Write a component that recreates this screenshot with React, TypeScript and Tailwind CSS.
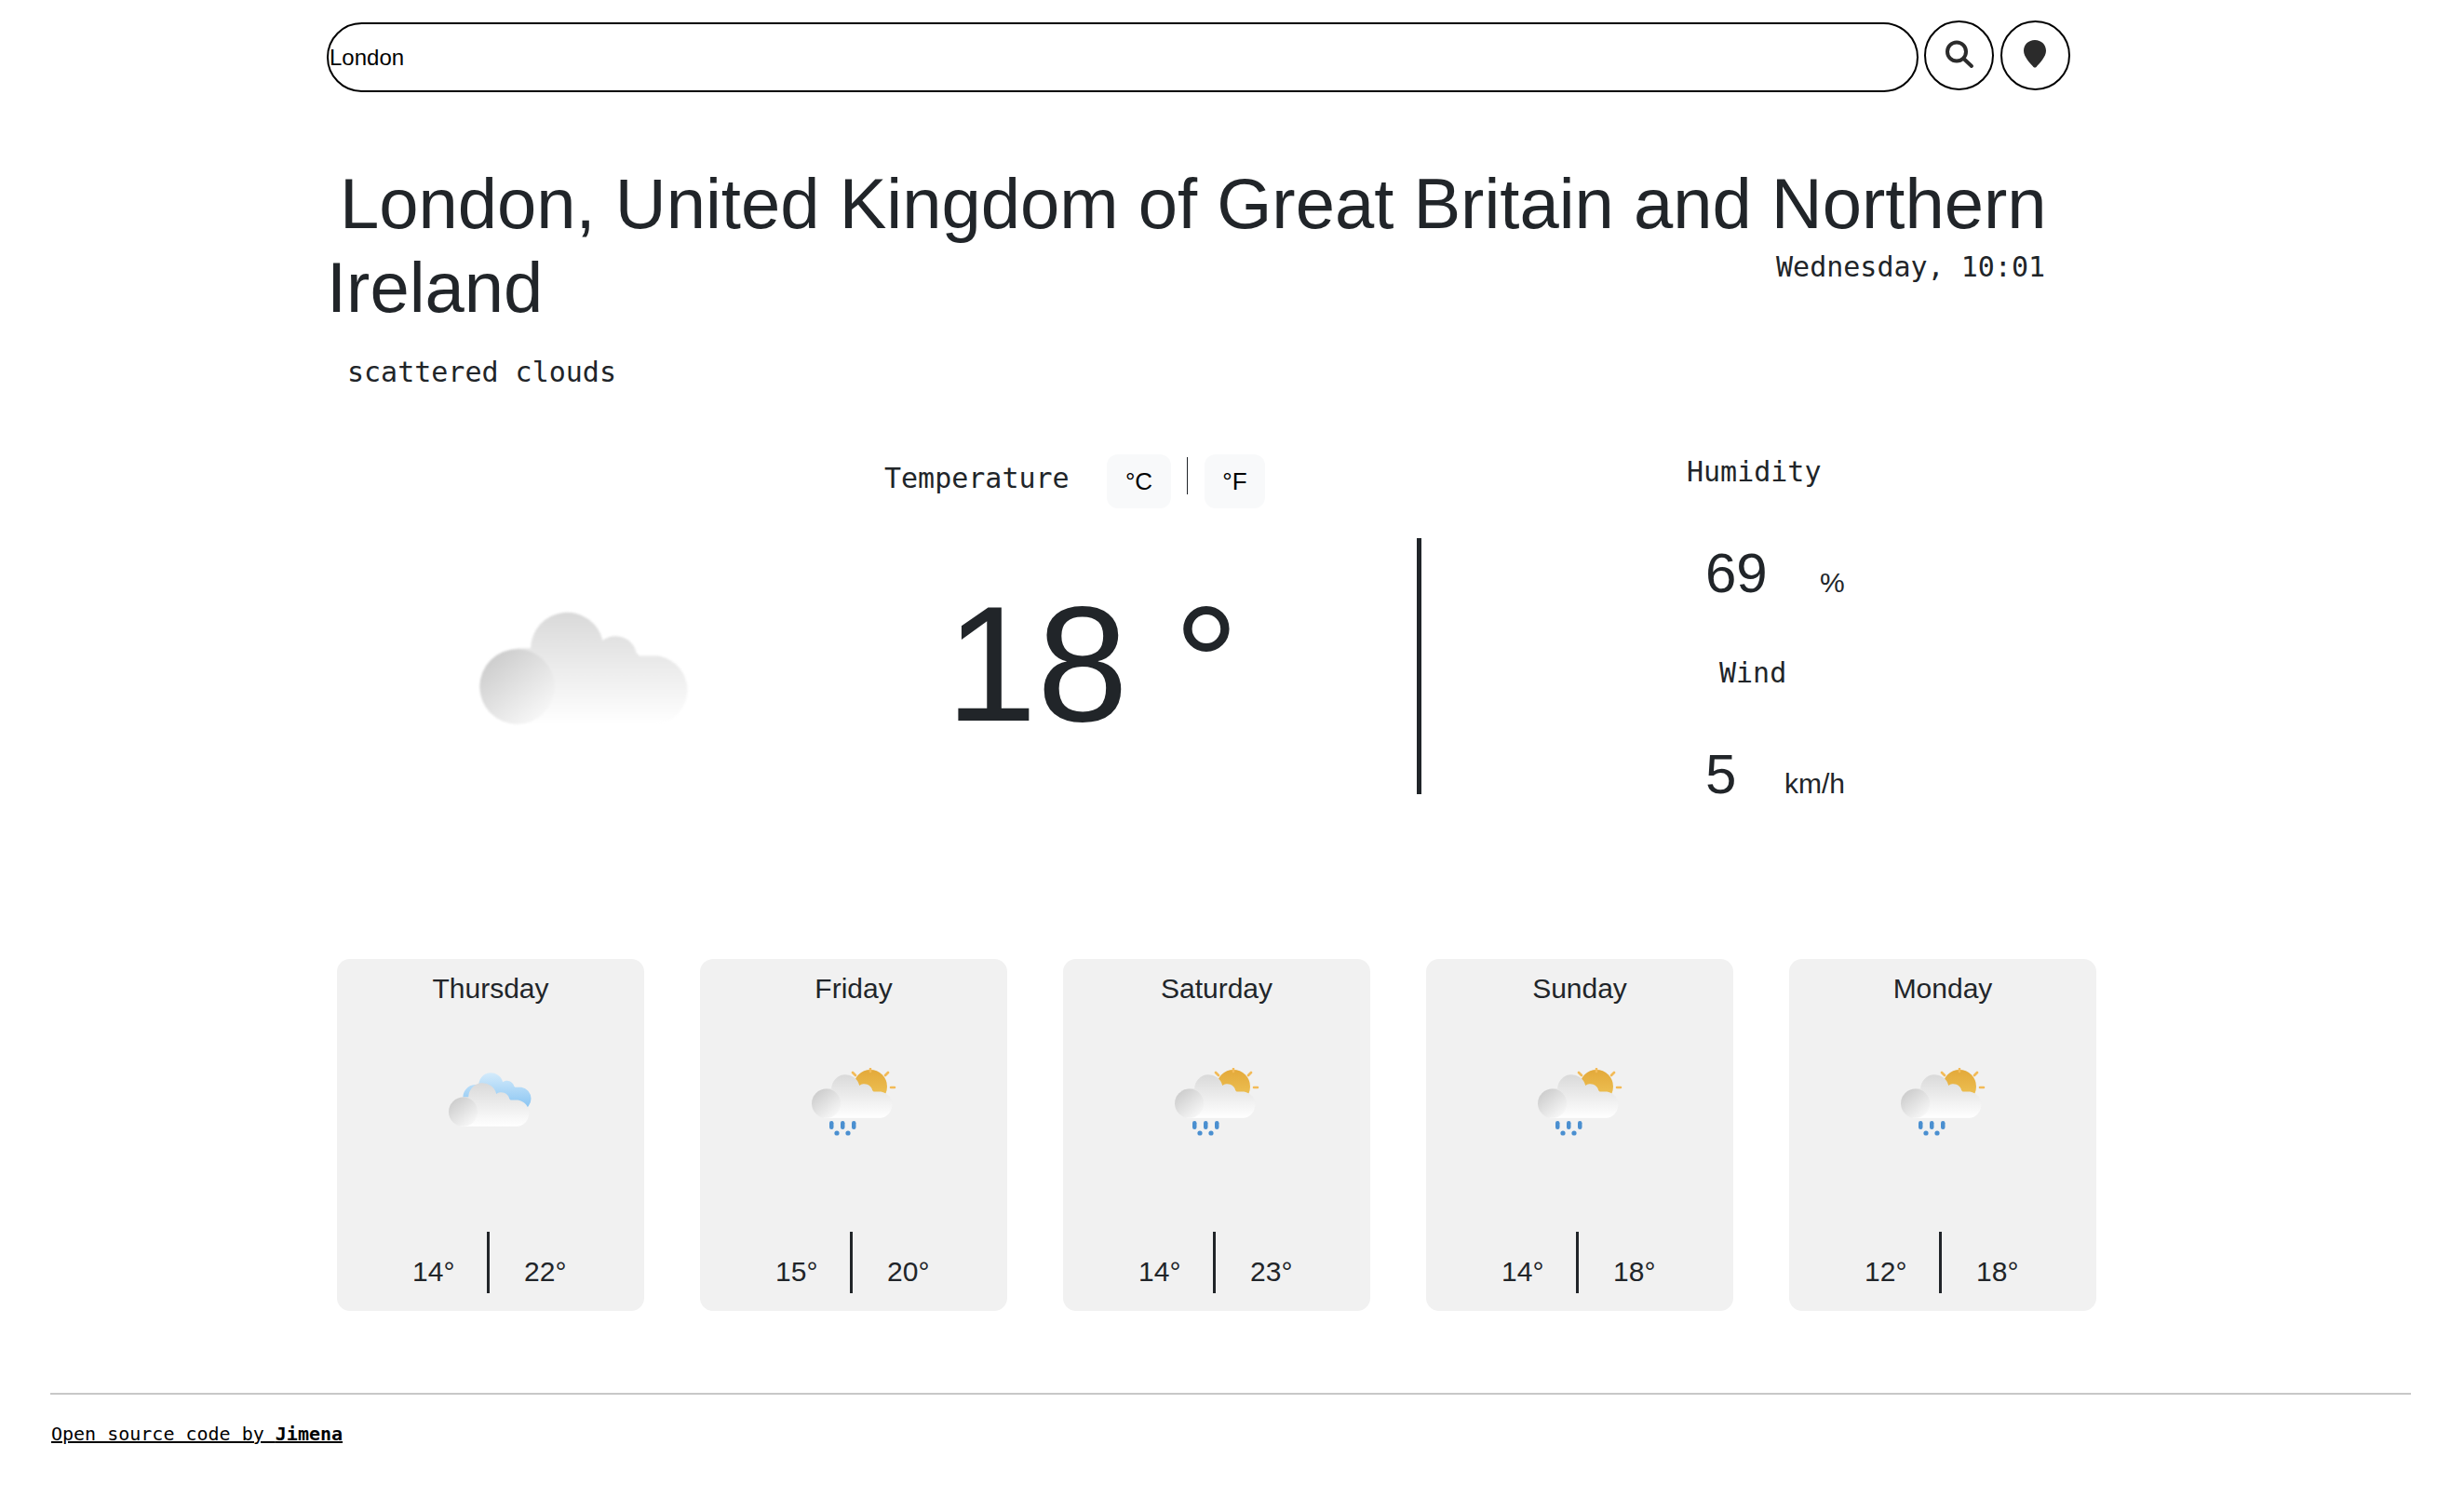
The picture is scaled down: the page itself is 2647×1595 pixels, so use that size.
const forecast = [
  { day: "Thursday", low: 14, high: 22, kind: "cloudy" },
  { day: "Friday", low: 15, high: 20, kind: "rain" },
  { day: "Saturday", low: 14, high: 23, kind: "rain" },
  { day: "Sunday", low: 14, high: 18, kind: "rain" },
  { day: "Monday", low: 12, high: 18, kind: "rain" },
];

const sans = "font-['Liberation_Sans',Arial,sans-serif]";
const mono = "font-['DejaVu_Sans_Mono',monospace]";

const CLOUD_PATH =
  "M53 38a38 38 0 0 1 75 -8a22 22 0 0 1 35 13q3 2 3 3h20a36 36 0 0 1 0 71h-140a30 30 0 0 1 -5 -79z";

// cloud shape is drawn at 222x117, callers scale it
function CloudShape({ id }: { id: string }) {
  return (
    <g>
      <defs>
        <linearGradient id={`${id}-body`} gradientUnits="userSpaceOnUse" x1="0" y1="0" x2="0" y2="117">
          <stop offset="0" stopColor="#d9d9d9" />
          <stop offset="1" stopColor="#ffffff" />
        </linearGradient>
        <linearGradient id={`${id}-ball`} x1="0.1" y1="0.1" x2="0.8" y2="0.95">
          <stop offset="0" stopColor="#cbcbcb" />
          <stop offset="1" stopColor="#f8f8f8" />
        </linearGradient>
      </defs>
      <path d={CLOUD_PATH} fill={`url(#${id}-body)`} />
      <circle cx="39" cy="78" r="39" fill={`url(#${id}-ball)`} />
    </g>
  );
}

function RainIcon({ id }: { id: string }) {
  return (
    <svg width="100" height="80" viewBox="0 0 100 80" className="block blur-[0.5px]">
      <defs>
        <linearGradient id={`${id}-sun`} x1="0" y1="0" x2="0" y2="1">
          <stop offset="0" stopColor="#e3a93a" />
          <stop offset="1" stopColor="#f0c75a" />
        </linearGradient>
      </defs>
      <circle cx="68" cy="20" r="18" fill={`url(#${id}-sun)`} />
      <g stroke="#f3bb58" strokeWidth="2.6" strokeLinecap="round">
        <path d="M68 2V-1M52 6L49 3M84 6L87 3M90 19h4" transform="translate(0 2)" />
      </g>
      <g transform="translate(5 7) scale(0.4)">
        <CloudShape id={id} />
      </g>
      <g fill="#4a8fd0">
        <rect x="24" y="57" width="4.500" height="9" rx="2.200" />
        <rect x="36" y="57" width="4.500" height="9" rx="2.200" />
        <rect x="48" y="57" width="4.500" height="9" rx="2.200" />
        <circle cx="32" cy="70" r="2.600" />
        <circle cx="44" cy="70" r="2.600" />
      </g>
    </svg>
  );
}

function CloudyIcon({ id }: { id: string }) {
  return (
    <svg width="100" height="80" viewBox="0 0 100 80" className="block blur-[0.5px]">
      <defs>
        <linearGradient id={`${id}-sky`} x1="0" y1="0" x2="0" y2="1">
          <stop offset="0" stopColor="#d4ebfb" />
          <stop offset="1" stopColor="#84c2f2" />
        </linearGradient>
      </defs>
      <g transform="translate(19 5) scale(0.345)" fill={`url(#${id}-sky)`}>
        <path d={CLOUD_PATH} />
      </g>
      <g transform="translate(5 16) scale(0.4)">
        <CloudShape id={id} />
      </g>
    </svg>
  );
}

export default function App() {
  return (
    <div className={`w-[2647px] h-[1595px] bg-white text-[#212529] overflow-hidden ${sans}`}>
      <div className="pl-[351px] pt-[22px] flex gap-[6px] items-start">
        <input
          defaultValue="London"
          className="w-[1710px] h-[75px] mt-[2px] border-2 border-black rounded-full px-[1px] text-[24px] text-black outline-none"
        />
        <button className="w-[75px] h-[75px] rounded-full border-2 border-black flex items-center justify-center">
          <svg width="34" height="34" viewBox="0 0 34 34" className="mr-[-1px]" fill="none" stroke="#2b2b2b" strokeWidth="4" strokeLinecap="round">
            <circle cx="14" cy="12.500" r="10" />
            <path d="M21.500 20L30 28" />
          </svg>
        </button>
        <button className="w-[75px] h-[75px] ml-[1px] rounded-full border-2 border-black flex items-center justify-center">
          <svg width="24" height="30" viewBox="0 0 24 30" className="mb-[3px] mr-[1px]">
            <path d="M12 0C5 0 0 5 0 11.500C0 18 7 25 10.500 29q1.500 1 3 0C17 25 24 18 24 11.500C24 5 19 0 12 0z" fill="#2b2b2b" />
          </svg>
        </button>
      </div>

      <div className="pl-[351px] pt-[75px] w-[2197px]">
        <h1 className="text-[76px] leading-[90px] whitespace-nowrap pl-[14px]">
          London, United Kingdom of Great Britain and Northern
        </h1>
        <div className="flex justify-between items-start">
          <h1 className="text-[76px] leading-[90px]">Ireland</h1>
          <div className={`${mono} text-[30px] leading-[36px] pt-[5px] text-[#212529]`}>Wednesday, 10:01</div>
        </div>
        <div className={`${mono} text-[30px] leading-[36px] pl-[22px] mt-[28px]`}>scattered clouds</div>
      </div>

      <div className="flex items-start mt-[70px] pl-[515px]">
        <svg width="232" height="124" viewBox="0 0 224 120" className="mt-[169px] shrink-0 blur-[1px]">
          <CloudShape id="main" />
        </svg>
        <div className="w-[500px] ml-[203px] shrink-0">
          <div className="flex items-start">
            <span className={`${mono} text-[30px] leading-[36px] mt-[8px] w-[239px]`}>Temperature</span>
            <span className="w-[69px] h-[58px] rounded-[12px] bg-[#f8f9fa] text-black text-[26px] flex items-center justify-center">°C</span>
            <span className="w-px h-[40px] bg-[#212529] mt-[3px] ml-[17px]" />
            <span className="w-[65px] h-[58px] rounded-[12px] bg-[#f8f9fa] text-black text-[26px] flex items-center justify-center ml-[18px]">°F</span>
          </div>
          <div className="text-[176px] leading-[176px] mt-[79px] ml-[66px] whitespace-nowrap">18 °</div>
        </div>
        <div className="w-[5px] h-[275px] bg-[#212529] ml-[72px] mt-[90px] shrink-0" />
        <div className="ml-[285px] w-[300px] shrink-0">
          <div className={`${mono} text-[30px] leading-[36px] mt-[1px]`}>Humidity</div>
          <div className="flex items-baseline mt-[56px] pl-[20px]">
            <span className="text-[60px] leading-[70px] w-[123px]">69</span>
            <span className="text-[30px]">%</span>
          </div>
          <div className={`${mono} text-[30px] leading-[36px] mt-[54px] pl-[35px]`}>Wind</div>
          <div className="flex items-baseline mt-[56px] pl-[20px]">
            <span className="text-[60px] leading-[70px] w-[85px]">5</span>
            <span className="text-[30px]">km/h</span>
          </div>
        </div>
      </div>

      <div className="flex gap-[60px] pl-[362px] mt-[163px]">
        {forecast.map((f) => (
          <div key={f.day} className="w-[330px] h-[378px] bg-[#f1f1f1] rounded-[14px] flex flex-col items-center">
            <div className="text-[30px] leading-[36px] mt-[14px]">{f.day}</div>
            <div className="mt-[67px] h-[80px]">
              {f.kind === "cloudy" ? <CloudyIcon id={f.day} /> : <RainIcon id={f.day} />}
            </div>
            <div className="flex items-end mt-[96px] h-[66px] mr-[5px]">
              <span className="text-[30px] leading-[36px] w-[80px] text-right pr-[35px] mb-[5px]">{f.low}°</span>
              <span className="w-[3px] h-[66px] bg-[#212529]" />
              <span className="text-[30px] leading-[36px] w-[80px] pl-[37px] mb-[5px]">{f.high}°</span>
            </div>
          </div>
        ))}
      </div>

      <div className="ml-[54px] mr-[57px] mt-[88px] border-t-2 border-[#c8c8c8]" />
      <a className={`${mono} block mt-[30px] ml-[55px] text-[20px] leading-[24px] underline text-black`}>
        Open source code by <strong>Jimena</strong>
      </a>
    </div>
  );
}
